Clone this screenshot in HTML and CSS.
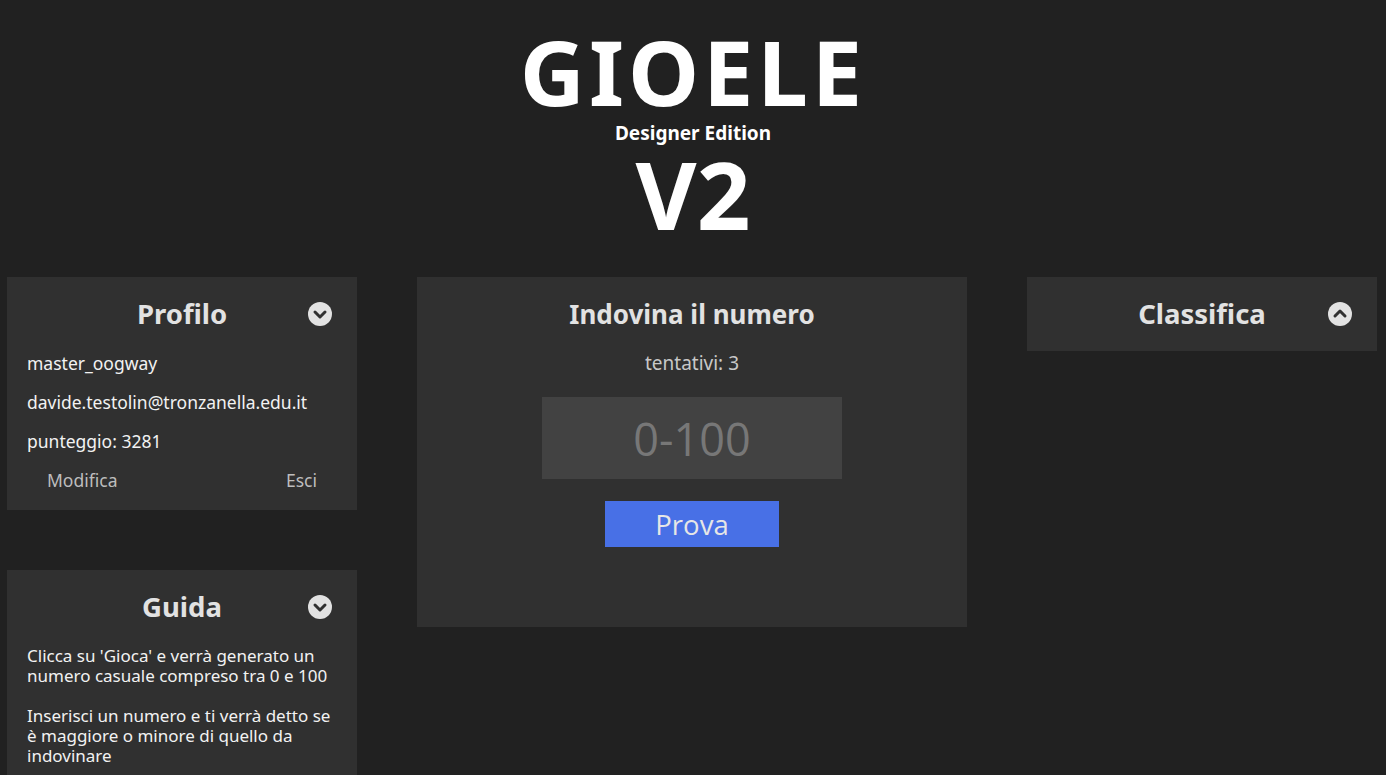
FILE: index.html
```html
<!DOCTYPE html>
<html lang="it">
<head>
  <meta charset="UTF-8" />
  <meta name="viewport" content="width=device-width, initial-scale=1.0" />
  <title>GIOELE V2</title>
  <link rel="stylesheet" href="styles.css">
</head>
<body>
  <header class="header">
    <h1 class="title">GIOELE</h1>
    <div class="edition">Designer Edition</div>
    <div class="version">V2</div>
  </header>

  <main class="layout">
    <!-- colonna sinistra -->
    <div class="column">
      <section class="card">
        <div class="card-head">
          <h2>Profilo</h2>
          <span class="toggle">
            <svg width="24" height="24" viewBox="0 0 24 24"><circle cx="12" cy="12" r="12" fill="#e2e2e2"/><polyline points="7,10 12,15 17,10" fill="none" stroke="#303030" stroke-width="3" stroke-linecap="round" stroke-linejoin="round"/></svg>
          </span>
        </div>
        <div class="profile-body">
          <p>master_oogway</p>
          <p>davide.testolin@tronzanella.edu.it</p>
          <p>punteggio: 3281</p>
          <div class="profile-actions">
            <button class="link-btn">Modifica</button>
            <button class="link-btn">Esci</button>
          </div>
        </div>
      </section>

      <section class="card">
        <div class="card-head">
          <h2>Guida</h2>
          <span class="toggle">
            <svg width="24" height="24" viewBox="0 0 24 24"><circle cx="12" cy="12" r="12" fill="#e2e2e2"/><polyline points="7,10 12,15 17,10" fill="none" stroke="#303030" stroke-width="3" stroke-linecap="round" stroke-linejoin="round"/></svg>
          </span>
        </div>
        <div class="guide-body">
          <p>Clicca su 'Gioca' e verrà generato un numero casuale compreso tra 0 e 100</p>
          <p>Inserisci un numero e ti verrà detto se è maggiore o minore di quello da indovinare</p>
        </div>
      </section>
    </div>

    <!-- gioco -->
    <section class="card game">
      <h2>Indovina il numero</h2>
      <div class="tries">tentativi: 3</div>
      <input class="guess" type="text" placeholder="0-100">
      <button class="try-btn">Prova</button>
    </section>

    <!-- classifica -->
    <div class="column">
      <section class="card">
        <div class="card-head">
          <h2>Classifica</h2>
          <span class="toggle">
            <svg width="24" height="24" viewBox="0 0 24 24"><circle cx="12" cy="12" r="12" fill="#e2e2e2"/><polyline points="7,14 12,9 17,14" fill="none" stroke="#303030" stroke-width="3" stroke-linecap="round" stroke-linejoin="round"/></svg>
          </span>
        </div>
      </section>
    </div>
  </main>
</body>
</html>
```

FILE: styles.css
```css
body {
  margin: 0;
  background-color: #212121;
  color: #f2f2f2;
  font-family: "Noto Sans", "Open Sans", sans-serif;
  overflow: hidden;
}

.header {
  text-align: center;
  color: #ffffff;
  padding-top: 28px;
}

.title {
  margin: 0;
  font-size: 90px;
  line-height: 86px;
  font-weight: 700;
  letter-spacing: 4px;
}

.edition {
  font-size: 19px;
  font-weight: 700;
  line-height: 24px;
  margin-top: 7px;
}

.version {
  font-size: 94px;
  font-weight: 700;
  line-height: 98px;
}

.layout {
  display: flex;
  gap: 60px;
  padding-left: 7px;
  margin-top: 34px;
  align-items: flex-start;
}

.column {
  display: flex;
  flex-direction: column;
  gap: 60px;
  width: 350px;
}

.card {
  background-color: #303030;
  padding: 20px;
}

.card h2 {
  margin: 0;
  font-size: 27.5px;
  line-height: 34px;
  font-weight: 700;
  color: #e2e2e2;
  text-align: center;
}

.game h2 {
  font-size: 26px;
}

.card-head {
  position: relative;
}

.toggle {
  position: absolute;
  right: 5px;
  top: 5px;
  width: 24px;
  height: 24px;
}

.profile-body {
  display: flex;
  flex-direction: column;
  gap: 19px;
  margin-top: 22px;
}

.profile-body p,
.guide-body p {
  margin: 0;
  font-size: 17.5px;
  line-height: 20px;
}

.guide-body p {
  font-size: 17px;
}

.profile-actions {
  display: flex;
  justify-content: space-between;
  padding: 0 20px;
}

.link-btn {
  background: none;
  border: none;
  padding: 0;
  font-family: inherit;
  font-size: 17.5px;
  line-height: 20px;
  color: #bdbdbd;
  cursor: pointer;
}

.guide-body {
  display: flex;
  flex-direction: column;
  gap: 20px;
  margin-top: 22px;
}

.game {
  width: 510px;
  height: 310px;
  display: flex;
  flex-direction: column;
  align-items: center;
}

.tries {
  margin-top: 22px;
  font-size: 19px;
  line-height: 20px;
  color: #c8c8c8;
}

.guess {
  margin-top: 24px;
  width: 300px;
  height: 82px;
  box-sizing: border-box;
  border: none;
  background-color: #424242;
  text-align: center;
  font-family: "Open Sans", sans-serif;
  font-size: 45px;
  color: #eeeeee;
  outline: none;
}

.guess::placeholder {
  color: #777777;
}

.try-btn {
  margin-top: 22px;
  width: 174px;
  height: 46px;
  border: none;
  background-color: #4870e6;
  color: #e6e6e6;
  font-family: "Open Sans", sans-serif;
  font-size: 27.5px;
  cursor: pointer;
}
```
